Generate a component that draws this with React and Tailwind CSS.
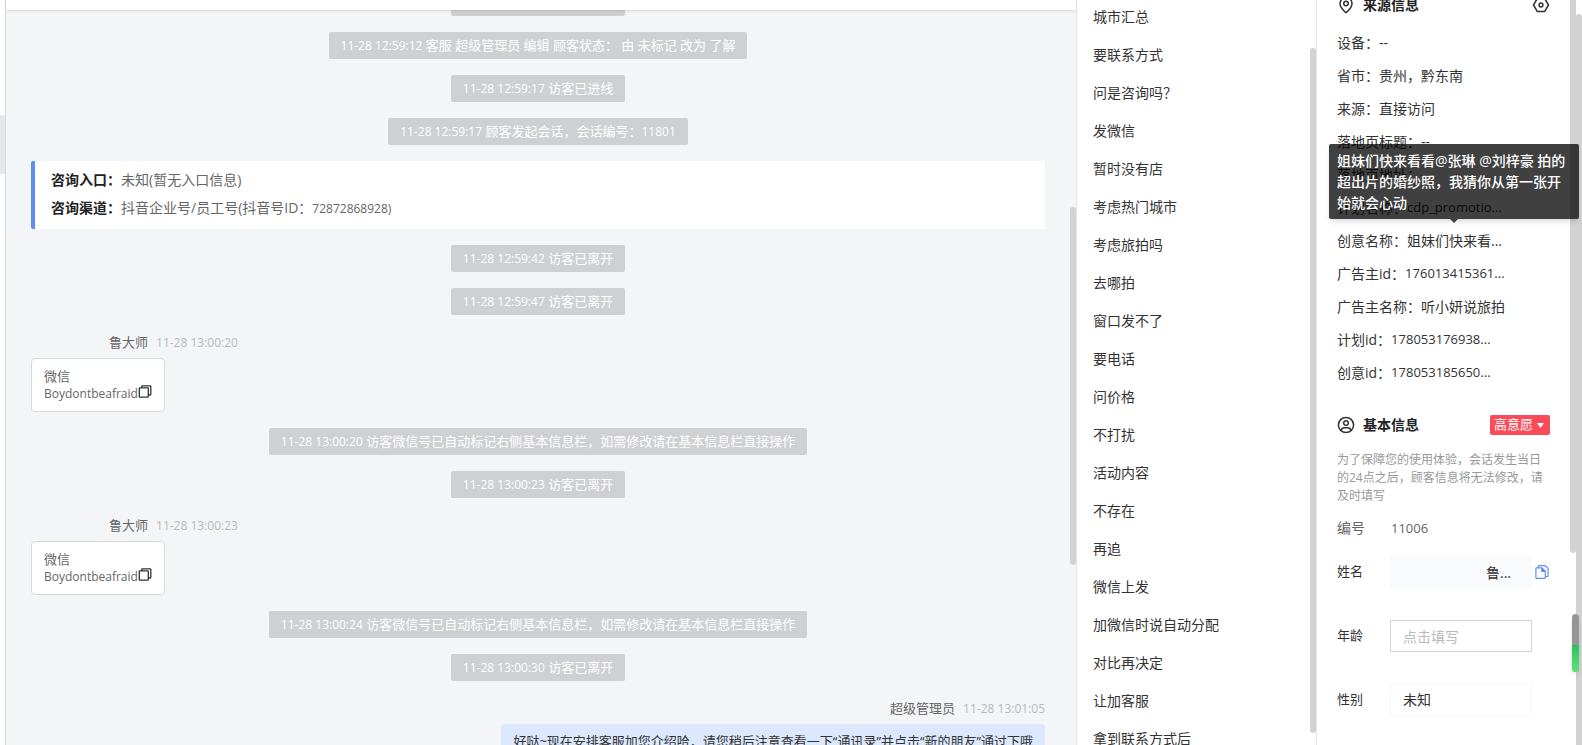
import React from 'react';
import { MapPin } from 'lucide-react';

const NOTICES_BEFORE = [
  { time: '11-28 12:59:08', text: '访客已进线' },
  { time: '11-28 12:59:12', text: '客服 超级管理员 编辑 顾客状态： 由 未标记 改为 了解' },
  { time: '11-28 12:59:17', text: '访客已进线' },
  { time: '11-28 12:59:17', text: '顾客发起会话，会话编号：', code: '11801' },
];

const QUICK_REPLIES = [
  '城市汇总', '要联系方式', '问是咨询吗？', '发微信', '暂时没有店', '考虑热门城市', '考虑旅拍吗',
  '去哪拍', '窗口发不了', '要电话', '问价格', '不打扰', '活动内容', '不存在', '再追', '微信上发',
  '加微信时说自动分配', '对比再决定', '让加客服', '拿到联系方式后',
];

const SOURCE_ROWS = [
  { label: '设备', value: '--' },
  { label: '省市', value: '贵州，黔东南' },
  { label: '来源', value: '直接访问' },
  { label: '落地页标题', value: '--' },
  { label: '落地页地址', value: '--' },
  { label: '计划名称', value: 'cdp_promotio...', code: true },
  { label: '创意名称', value: '姐妹们快来看...', tip: '姐妹们快来看看@张琳 @刘梓豪 拍的超出片的婚纱照，我猜你从第一张开始就会心动' },
  { label: '广告主id', value: '176013415361...', code: true },
  { label: '广告主名称', value: '听小妍说旅拍' },
  { label: '计划id', value: '178053176938...', code: true },
  { label: '创意id', value: '178053185650...', code: true },
];

const CopyIcon = () => (
  <svg className="w-3.5 h-3.5" viewBox="0 0 14 14" fill="none" stroke="currentColor" strokeWidth="1.3" strokeLinejoin="round">
    <rect x="1.3" y="2.9" width="9" height="9.2" rx="0.6" />
    <path d="M3.700 2.900V1.500c0-.4.300-.7.700-.7h7.700c.4 0 .7.300.7.700v7.800c0 .4-.3.700-.7.700h-1.800" />
  </svg>
);

const FileCopyIcon = () => (
  <svg className="w-3.5 h-3.5" viewBox="0 0 14 14" fill="none" stroke="currentColor" strokeWidth="1.2" strokeLinejoin="round">
    <path d="M1.600 2.800h5.200l3.500 3.500v6.300c0 .4-.3.700-.7.700h-8c-.4 0-.7-.3-.7-.7V3.500c0-.4.300-.7.700-.7z" />
    <path d="M6.800 2.800v3.500h3.500z" fill="currentColor" />
    <path d="M3.200 2.800V1.400c0-.4.300-.7.700-.7h6.200l3 2.700v7.400c0 .4-.3.700-.7.700h-2.100" />
  </svg>
);

const SettingIcon = () => (
  <svg className="w-[18px] h-[18px]" viewBox="0 0 18 18" fill="none" stroke="currentColor" strokeWidth="1.5" strokeLinejoin="round">
    <path d="M5.400 2.400h7.200L16.500 9l-3.900 6.600H5.400L1.500 9z" />
    <circle cx="9" cy="9" r="1.900" />
  </svg>
);

const UserIcon = () => (
  <svg className="w-[18px] h-[18px]" viewBox="0 0 18 18" fill="none" stroke="currentColor" strokeWidth="1.5">
    <circle cx="9" cy="9" r="7.600" />
    <circle cx="9" cy="7" r="2.300" />
    <path d="M4 14.500c.5-2.100 1.900-2.800 3.400-2.800h3.200c1.500 0 2.900.7 3.400 2.800" />
  </svg>
);

const Notice = ({ time, text, code }) => (
  <div className="flex justify-center mb-4">
    <div className="h-[27px] leading-[27px] px-3 rounded-xs bg-[#cfd0d2] text-white text-[13px] whitespace-nowrap">
      <span className="text-xs">{time}</span> {text}
      {code && <span className="text-xs">{code}</span>}
    </div>
  </div>
);

const MessageMeta = ({ name, time }) => (
  <div className="flex items-center gap-2 h-[23px] mb-1 text-[13px] text-[#666]">
    <span>{name}</span>
    <span className="text-xs text-[#b8babd]">{time}</span>
  </div>
);

const ContactMessage = ({ time }) => (
  <div className="mb-4">
    <div className="pl-[78px]">
      <MessageMeta name="鲁大师" time={time} />
    </div>
    <div className="w-fit px-3 py-2 rounded-sm border border-[#d5dadd] bg-white text-[13px] leading-[18px] text-[#666]">
      <div>微信</div>
      <div className="flex items-start">
        <span className="text-xs leading-[18px]">Boydontbeafraid</span>
        <button type="button" aria-label="复制" className="text-[#333]">
          <CopyIcon />
        </button>
      </div>
    </div>
  </div>
);

const ChatPanel = () => (
  <main className="flex-1 min-w-0 flex flex-col bg-[#f4f5f7]">
    <header className="relative z-10 h-2.5 shrink-0 bg-white shadow-sm" />
    <div className="flex-1 min-h-0 flex overflow-hidden">
      <div className="flex-1 min-w-0 px-[25px]">
        <div className="-mt-[21px]">
          {NOTICES_BEFORE.map((notice, i) => <Notice key={i} {...notice} />)}
        </div>
        <div className="mb-4 h-[68px] pl-4 py-[5px] border-l-4 border-[#5b8ff0] rounded-l-xs bg-white text-sm leading-7 text-[#666]">
          <p><span className="font-bold text-[#222]">咨询入口：</span>未知(暂无入口信息)</p>
          <p>
            <span className="font-bold text-[#222]">咨询渠道：</span>抖音企业号/员工号(抖音号ID：
            <span className="text-xs">72872868928)</span>
          </p>
        </div>
        <Notice time="11-28 12:59:42" text="访客已离开" />
        <Notice time="11-28 12:59:47" text="访客已离开" />
        <ContactMessage time="11-28 13:00:20" />
        <Notice time="11-28 13:00:20" text="访客微信号已自动标记右侧基本信息栏，如需修改请在基本信息栏直接操作" />
        <Notice time="11-28 13:00:23" text="访客已离开" />
        <ContactMessage time="11-28 13:00:23" />
        <Notice time="11-28 13:00:24" text="访客微信号已自动标记右侧基本信息栏，如需修改请在基本信息栏直接操作" />
        <Notice time="11-28 13:00:30" text="访客已离开" />
        <div className="flex flex-col items-end">
          <MessageMeta name="超级管理员" time="11-28 13:01:05" />
          <div className="px-3 py-2 rounded-sm bg-[#dbe8fe] text-[13px] leading-[18px] text-[#333]">
            好哒~现在安排客服加您介绍哈，请您稍后注意查看一下“通讯录”并点击“新的朋友”通过下哦
          </div>
        </div>
      </div>
      <div className="w-1.5 pt-[197px]">
        <div className="h-[358px] rounded-full bg-[#d2d3d4]" />
      </div>
    </div>
  </main>
);

const QuickReplies = () => (
  <aside className="w-60 shrink-0 flex overflow-hidden border-l border-[#e6e6e8] bg-white">
    <ul className="flex-1 min-w-0 -mt-0.5 pl-4">
      {QUICK_REPLIES.map((item) => (
        <li key={item} className="h-[38px]">
          <button type="button" className="w-full h-full text-left text-sm text-[#333]">{item}</button>
        </li>
      ))}
    </ul>
    <div className="w-1.5 pt-12">
      <div className="h-[685px] rounded-full bg-[#d2d2d2]" />
    </div>
  </aside>
);

const Tooltip = ({ children }) => (
  <div role="tooltip" className="absolute z-20 bottom-full left-0 -ml-2 mb-[5px] w-[250px] px-2 py-1.5 rounded-xs bg-black/75 shadow-md text-sm leading-[21px] font-medium text-white">
    {children}
    <svg className="absolute top-full left-1/2 -ml-1 w-2 h-1" viewBox="0 0 8 4">
      <path d="M0 0h8L4 4z" fill="#404040" />
    </svg>
  </div>
);

const FIELD = 'w-[142px] h-8 border text-sm text-[#333] outline-none appearance-none';

const CustomerPanel = () => (
  <aside className="relative w-[266px] shrink-0 flex border-l border-[#e6e6e8] bg-white">
    <div className="flex-1 min-w-0 px-5">
      <div className="-mt-1.5 mb-2.5 h-[22px] flex items-center gap-2 text-[#333]">
        <MapPin className="w-[18px] h-[18px]" />
        <h2 className="flex-1 text-sm font-bold text-[#222]">来源信息</h2>
        <button type="button" aria-label="设置"><SettingIcon /></button>
      </div>
      <dl className="mb-[26px] text-sm text-[#333]">
        {SOURCE_ROWS.map((row) => (
          <div key={row.label} className="relative h-[33px] flex items-center whitespace-nowrap">
            <dt>{row.label}：</dt>
            <dd className={row.code ? 'text-[13px]' : ''}>{row.value}</dd>
            {row.tip && (
              <div className="absolute left-0 top-0 whitespace-normal">
                <Tooltip>{row.tip}</Tooltip>
              </div>
            )}
          </div>
        ))}
      </dl>
      <div className="h-5 mb-4 flex items-center gap-2 text-[#333]">
        <UserIcon />
        <h2 className="flex-1 text-sm font-bold text-[#222]">基本信息</h2>
        <button type="button" className="h-5 w-[60px] pl-1 flex items-center gap-1 rounded-xs bg-[#fb4b58] text-[13px] text-white">
          高意愿
          <svg className="w-[7px] h-[5px]" viewBox="0 0 7 5"><path d="M0 0h7L3.500 5z" fill="currentColor" /></svg>
        </button>
      </div>
      <p className="text-xs leading-[18px] text-[#999]">
        为了保障您的使用体验，会话发生当日的24点之后，顾客信息将无法修改，请及时填写
      </p>
      <div className="mt-[3px] h-10 flex items-center text-sm text-[#666]">
        <span className="w-[54px]">编号</span>
        <span className="text-[13px]">11006</span>
      </div>
      <div className="flex flex-col gap-8 mt-2 text-[13px] text-[#333]">
        <div className="flex items-center">
          <label htmlFor="name" className="w-[53px]">姓名</label>
          <input id="name" readOnly value="鲁..." className={`${FIELD} pr-5 text-right border-[#f9fafb] bg-[#f9fafb]`} />
          <button type="button" aria-label="复制姓名" className="ml-[3px] text-[#5b8ff0]"><FileCopyIcon /></button>
        </div>
        <div className="flex items-center">
          <label htmlFor="age" className="w-[53px]">年龄</label>
          <input id="age" placeholder="点击填写" className={`${FIELD} px-3 border-[#d4d6d9] placeholder:text-[#bbb]`} />
        </div>
        <div className="flex items-center">
          <label htmlFor="gender" className="w-[53px]">性别</label>
          <select id="gender" className={`${FIELD} px-3 border-[#f5f6f7] rounded-xs`}>
            <option>未知</option>
          </select>
        </div>
      </div>
    </div>
    <div className="w-1.5">
      <div className="h-[553px] rounded-b-full bg-[#d2d2d2]" />
    </div>
    <div className="w-1.5 pt-3.5">
      <div className="h-full rounded-t-full bg-[#d2d2d2]" />
    </div>
    <div className="absolute top-[614px] right-[3px] w-[7px] h-[58px] rounded-full overflow-hidden bg-[#969696] shadow-md flex items-end">
      <div className="w-full h-[27px] bg-linear-to-b from-[#22c55e] to-[#5fe07a]" />
    </div>
  </aside>
);

export default function App() {
  return (
    <div className="h-screen flex overflow-hidden bg-white font-['Open_Sans','Noto_Sans_CJK_SC',sans-serif]">
      <div className="w-1.5 shrink-0 pt-[115px] border-r border-[#d6d8da]">
        <div className="h-[59px] bg-[#e6e7e9]" />
      </div>
      <ChatPanel />
      <QuickReplies />
      <CustomerPanel />
    </div>
  );
}
